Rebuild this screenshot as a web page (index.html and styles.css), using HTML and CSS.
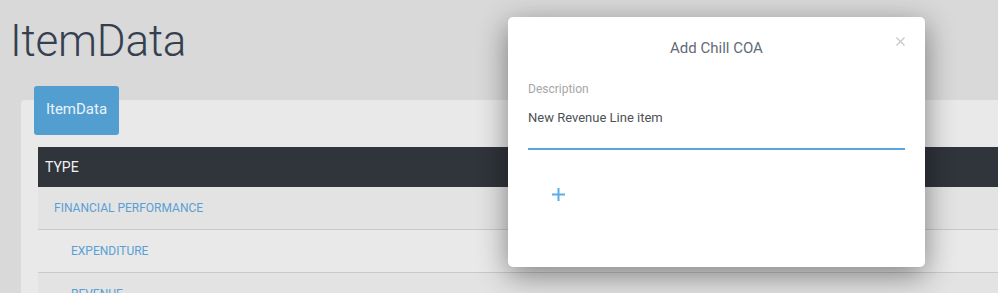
FILE: index.html
```html
<!DOCTYPE html>
<html lang="en">
<head>
    <meta charset="UTF-8">
    <meta name="viewport" content="width=device-width, initial-scale=1.0">
    <title>ItemData</title>
    <link rel="stylesheet" href="styles.css">
</head>
<body>
    <h1 class="page-title">ItemData</h1>

    <div class="panel">
        <div class="panel-tab">ItemData</div>
        <table class="type-table">
            <thead>
                <tr><th>TYPE</th></tr>
            </thead>
            <tbody>
                <tr class="level-1"><td><a href="#">FINANCIAL PERFORMANCE</a></td></tr>
                <tr class="level-2"><td><a href="#">EXPENDITURE</a></td></tr>
                <tr class="level-2"><td><a href="#">REVENUE</a></td></tr>
            </tbody>
        </table>
    </div>

    <div class="modal">
        <div class="modal-header">
            <h2 class="modal-title">Add Chill COA</h2>
            <button class="modal-close" type="button" aria-label="Close">
                <svg width="9" height="9" viewBox="0 0 9 9"><path d="M0.5 0.5 L8.5 8.5 M8.5 0.5 L0.5 8.5" stroke="#c6c6c6" stroke-width="1.1" fill="none"/></svg>
            </button>
        </div>
        <div class="modal-body">
            <label class="field-label" for="description">Description</label>
            <input class="field-input" id="description" value="New Revenue Line item">
            <button class="add-btn" type="button" aria-label="Add">
                <svg width="13" height="13" viewBox="0 0 13 13"><path d="M6.5 0 V13 M0 6.5 H13" stroke="#5aaee8" stroke-width="2" fill="none"/></svg>
            </button>
        </div>
    </div>
</body>
</html>
```

FILE: styles.css
```css
body {
    font-family: 'Roboto', 'Liberation Sans', sans-serif;
    margin: 0;
    padding: 0;
    background: #d9d9d9;
    overflow: hidden;
    height: 293px;
}

.page-title {
    font-size: 44px;
    font-weight: 300;
    line-height: 45px;
    letter-spacing: -0.2px;
    color: #34404f;
    margin: 19px 0 0 10px;
}

.panel {
    margin: 36px 0 0 21px;
    width: 1100px;
    background: #e9e9e9;
    border-radius: 4px;
    padding: 0 0 20px 17px;
}

.panel-tab {
    display: inline-flex;
    align-items: center;
    justify-content: center;
    width: 85px;
    height: 49px;
    box-sizing: border-box;
    padding-bottom: 4px;
    margin: -14px 0 0 -4px;
    background: #539ed0;
    color: #eaf3fa;
    font-size: 15px;
    border-radius: 3px;
    vertical-align: top;
}

.type-table {
    margin-top: 12px;
    width: 100%;
    border-collapse: collapse;
}

.type-table th {
    background: #30343b;
    color: #f2f2f2;
    font-weight: 400;
    font-size: 14px;
    text-align: left;
    height: 40px;
    padding: 0 0 0 7px;
}

.type-table td {
    height: 42px;
    padding: 0;
    border-bottom: 1px solid #c9c9c9;
    font-size: 12px;
}

.type-table tr:nth-child(odd) td {
    background: #e3e3e3;
}

.type-table a {
    color: #5a9fd4;
    text-decoration: none;
}

.level-1 td {
    padding-left: 16px;
}

.level-2 td {
    padding-left: 33px;
}

.modal {
    position: absolute;
    left: 508px;
    top: 17px;
    width: 417px;
    height: 250px;
    background: #fff;
    border-radius: 5px;
    box-shadow: 0 8px 30px rgba(0, 0, 0, 0.45);
}

.modal-header {
    position: relative;
    padding-top: 21px;
}

.modal-title {
    margin: 0;
    text-align: center;
    font-size: 15px;
    font-weight: 400;
    line-height: 20px;
    color: #636b77;
}

.modal-close {
    position: absolute;
    top: 20px;
    right: 20px;
    display: flex;
    background: none;
    border: none;
    padding: 0;
    cursor: pointer;
}

.modal-body {
    padding: 23px 20px 0 20px;
}

.field-label {
    display: block;
    font-size: 12px;
    line-height: 16px;
    color: #a6a6a6;
}

.field-input {
    display: block;
    width: 100%;
    box-sizing: border-box;
    margin-top: 13px;
    padding: 0 0 22px 0;
    border: none;
    border-bottom: 2px solid #5aa5dc;
    font-family: inherit;
    font-size: 13px;
    line-height: 16px;
    color: #4d5258;
    outline: none;
}

.add-btn {
    display: flex;
    margin: 38px 0 0 24px;
    padding: 0;
    background: none;
    border: none;
    cursor: pointer;
}
```
